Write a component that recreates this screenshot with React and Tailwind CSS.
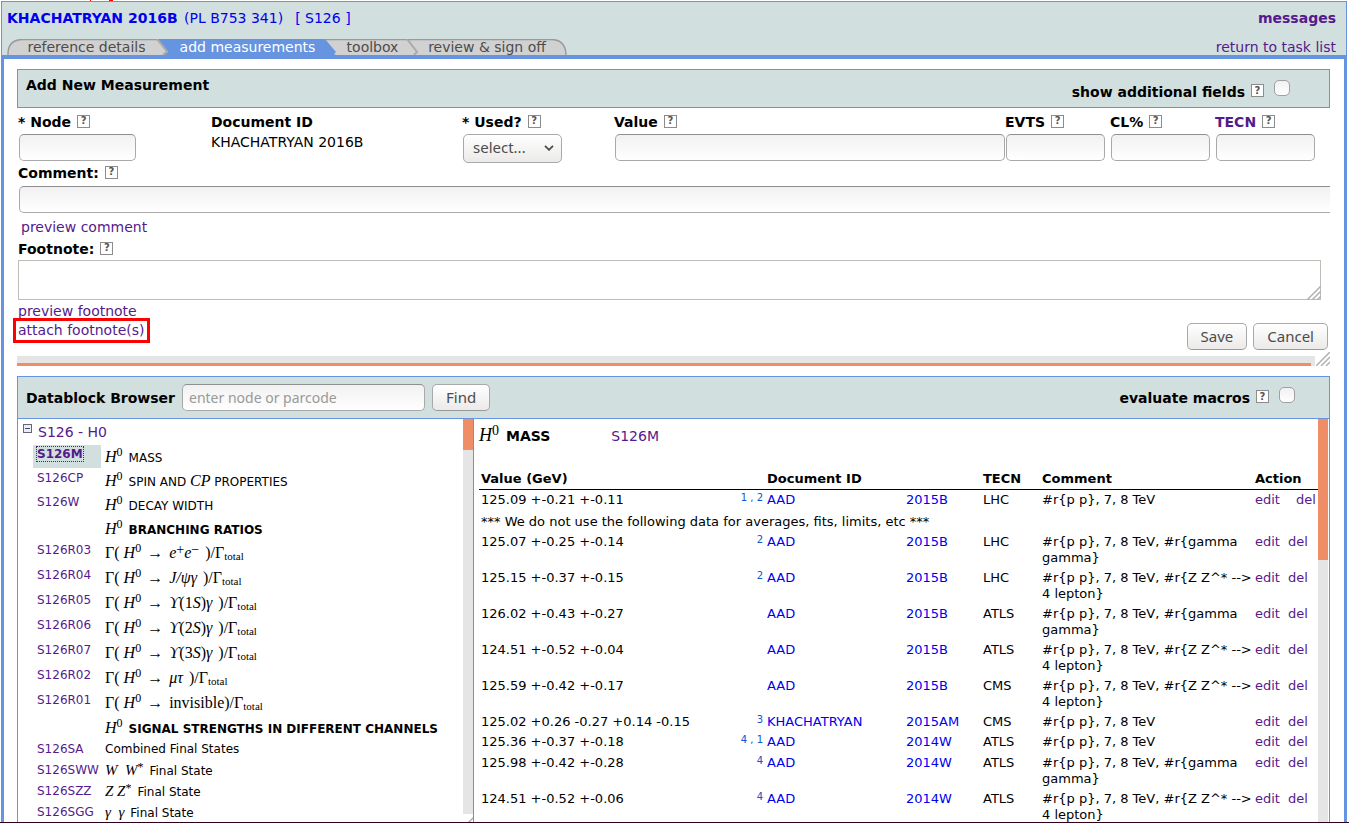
const ui = "font-['Noto_Sans','Open_Sans',sans-serif]";
const serif = "font-['Liberation_Serif',serif]";

const tabs = [
  { name: "reference details", width: "w-[159px]" },
  { name: "add measurements", width: "w-[163px]", active: true },
  { name: "toolbox", width: "w-[87px]" },
  { name: "review & sign off", width: "w-[142px]" },
];

const H0 = ({ size = "text-[12px]" }) => (
  <i>
    H<span className={`relative -top-1.5 not-italic ${size}`}>0</span>
  </i>
);

const Sup = ({ size = "text-sm", children }) => <span className={`relative -top-1 not-italic ${size}`}>{children}</span>;

const Ratio = ({ tight, children }) => (
  <span>
    Γ( <H0 /> <span className="mx-0.5">→</span> <span className={tight ? "" : "mr-1.5"}>{children}</span>
    )/Γ<span className="relative top-0.5 text-[11px]">total</span>
  </span>
);

const Upsilon = ({ n }) => (
  <Ratio>
    <i>ϒ</i>({n}
    <i>S</i>)<i>γ</i>
  </Ratio>
);

const nodes = [
  { code: "S126M", size: "h-6", text: "MASS", label: <H0 />, selected: true },
  {
    code: "S126CP",
    size: "h-6",
    label: <H0 />,
    text: (
      <>
        SPIN AND <i className={`text-base leading-none ${serif}`}>CP</i> PROPERTIES
      </>
    ),
  },
  { code: "S126W", size: "h-6", label: <H0 />, text: "DECAY WIDTH" },
  { size: "h-6", label: <H0 />, text: <b>BRANCHING RATIOS</b> },
  {
    code: "S126R03",
    size: "h-[25px]",
    label: (
      <Ratio>
        <i>
          e<Sup>+</Sup>e<Sup>−</Sup>
        </i>
      </Ratio>
    ),
  },
  { code: "S126R04", size: "h-[25px]", label: <Ratio><i>J/ψγ</i></Ratio> },
  { code: "S126R05", size: "h-[25px]", label: <Upsilon n="1" /> },
  { code: "S126R06", size: "h-[25px]", label: <Upsilon n="2" /> },
  { code: "S126R07", size: "h-[25px]", label: <Upsilon n="3" /> },
  { code: "S126R02", size: "h-[25px]", label: <Ratio><i>μτ</i></Ratio> },
  { code: "S126R01", size: "h-[25px]", label: <Ratio tight>invisible</Ratio> },
  { size: "h-6", label: <H0 />, text: <b>SIGNAL STRENGTHS IN DIFFERENT CHANNELS</b> },
  { code: "S126SA", size: "h-[21px]", short: true, text: "Combined Final States" },
  { code: "S126SWW", size: "h-[21px]", short: true, label: <i>W&nbsp; W<Sup size="text-[12px]">*</Sup></i>, text: "Final State" },
  { code: "S126SZZ", size: "h-[21px]", short: true, label: <i>Z Z<Sup size="text-[12px]">*</Sup></i>, text: "Final State" },
  { code: "S126SGG", size: "h-[21px]", short: true, label: <i>γ&nbsp; γ</i>, text: "Final State" },
];

const gamma = "#r{p p}, 7, 8 TeV, #r{gamma gamma}";
const lepton = "#r{p p}, 7, 8 TeV, #r{Z Z^* --> 4 lepton}";
const plain = "#r{p p}, 7, 8 TeV";

const rows = [
  { value: "125.07 +-0.25 +-0.14", notes: "2", doc: "AAD", year: "2015B", tecn: "LHC", comment: gamma },
  { value: "125.15 +-0.37 +-0.15", notes: "2", doc: "AAD", year: "2015B", tecn: "LHC", comment: lepton },
  { value: "126.02 +-0.43 +-0.27", doc: "AAD", year: "2015B", tecn: "ATLS", comment: gamma },
  { value: "124.51 +-0.52 +-0.04", doc: "AAD", year: "2015B", tecn: "ATLS", comment: lepton },
  { value: "125.59 +-0.42 +-0.17", doc: "AAD", year: "2015B", tecn: "CMS", comment: lepton },
  { value: "125.02 +0.26 -0.27 +0.14 -0.15", notes: "3", doc: "KHACHATRYAN", year: "2015AM", tecn: "CMS", comment: plain },
  { value: "125.36 +-0.37 +-0.18", notes: "4 , 1", doc: "AAD", year: "2014W", tecn: "ATLS", comment: plain },
  { value: "125.98 +-0.42 +-0.28", notes: "4", doc: "AAD", year: "2014W", tecn: "ATLS", comment: gamma },
  { value: "124.51 +-0.52 +-0.06", notes: "4", doc: "AAD", year: "2014W", tecn: "ATLS", comment: lepton },
];

const Help = () => (
  <button
    type="button"
    aria-label="help"
    className="mb-0.5 flex size-[13px] shrink-0 items-center justify-center border border-[#8c8c8c] bg-white text-[10px] leading-none font-bold text-[#555]"
  >
    ?
  </button>
);

const Label = ({ htmlFor, className = "", children }) => (
  <div className="flex h-5 items-center gap-1.5">
    <label htmlFor={htmlFor} className={`font-bold whitespace-nowrap ${className}`}>
      {children}
    </label>
    <Help />
  </div>
);

const TextBox = ({ className = "", ...props }) => (
  <input
    type="text"
    className={`h-[27px] rounded-[5px] border border-[#a9a9a9] border-t-[#8f8f8f] bg-linear-to-b from-[#f1f1f1] to-white px-1.5 text-sm placeholder:text-[#999] ${ui} ${className}`}
    {...props}
  />
);

const Button = ({ children }) => (
  <button
    type="button"
    className={`h-[27px] rounded-[5px] border border-[#a9a9a9] border-b-[#999] bg-linear-to-b from-white to-[#ebeae9] px-[13px] pb-0.5 text-[15px] leading-5 text-[#4c4c4c] ${ui}`}
  >
    {children}
  </button>
);

const CheckBox = ({ id }) => (
  <input
    id={id}
    type="checkbox"
    className="size-4 shrink-0 appearance-none rounded-[5px] border border-[#a0a0a0] bg-linear-to-b from-[#f1f1f1] to-white"
  />
);

const Grip = ({ className = "" }) => (
  <svg viewBox="0 0 14 14" className={`size-3.5 ${className}`} stroke="#b0b0b0" strokeWidth="1.5" aria-hidden="true">
    <path d="M0 14L14 0M5 14L14 5M10 14L14 10" />
  </svg>
);

const A = ({ className = "text-[#551a8b]", children }) => (
  <a href="#" className={className}>
    {children}
  </a>
);

const Measurement = ({ row, size = "h-5", gap = "gap-2" }) => (
  <tr className={size}>
    <td className="whitespace-nowrap">{row.value}</td>
    <td className="relative text-right text-[10px] whitespace-nowrap text-[#1155cc]">
      {row.notes && <span className="absolute top-0 right-0.5">{row.notes}</span>}
    </td>
    <td className="text-[#0000ee]">
      <A className="">{row.doc}</A>
    </td>
    <td className="text-[#0000ee]">
      <A className="">{row.year}</A>
    </td>
    <td>{row.tecn}</td>
    <td>{row.comment}</td>
    <td>
      <div className={`flex ${gap}`}>
        <A>edit</A>
        <A>del</A>
      </div>
    </td>
  </tr>
);

const Header = () => (
  <header className="relative flex h-[58px] justify-between border border-b-4 border-[#6794e0] bg-[#d2dfdf]">
    <svg viewBox="0 0 24 1" className="absolute -top-0.5 left-[88px] h-px w-6" fill="#ff0000" aria-hidden="true">
      <path d="M0 0h1v1H0zM19 0h4v1h-4z" />
    </svg>
    <div className="flex flex-col justify-between pl-[5px]">
      <div className="pt-1.5 leading-5 text-[#0000ee]">
        <A className="font-bold">KHACHATRYAN 2016B</A> <A className="ml-0.5">(PL B753 341)</A>
        <span className="ml-3">
          [ <A className="">S126</A> ]
        </span>
      </div>
      <nav className="relative flex h-4">
        <svg viewBox="0 0 560 16" className="absolute inset-0 h-4 w-[560px]" fill="none" aria-hidden="true">
          <path d="M1 17V15C1 6 6 .5 16 .5H544C554 .5 559 6 559 17Z" fill="#d1d1d1" stroke="#999" strokeWidth="1.4" />
          <path d="M151 0L161 13L157 16H329L327 15L329 13L318 0Z" fill="#6794e0" />
          <path d="M150 0L160 12.5L156 16M400 0L410 13L407 16" stroke="#aaa" strokeWidth="2" />
        </svg>
        {tabs.map((tab) => (
          <a
            key={tab.name}
            href="#"
            className={`relative text-center leading-4 whitespace-nowrap ${tab.width} ${tab.active ? "text-white" : "text-[#4c4c4c]"}`}
          >
            {tab.name}
          </a>
        ))}
      </nav>
    </div>
    <div className="flex flex-col justify-between pr-2.5 text-right">
      <span className="pt-1.5 leading-5 font-bold">
        <A>messages</A>
      </span>
      <span className="leading-4">
        <A>return to task list</A>
      </span>
    </div>
  </header>
);

const MeasurementForm = () => (
  <form>
    <div className="flex h-[39px] items-center justify-between border border-[#6794e0] bg-[#d2dfdf] px-2">
      <h2 className="pb-2 font-bold">Add New Measurement</h2>
      <div className="flex items-center gap-2.5 pr-[31px]">
        <div className="pt-1.5">
          <Label htmlFor="additional">show additional fields</Label>
        </div>
        <div className="flex pb-0.5">
          <CheckBox id="additional" />
        </div>
      </div>
    </div>
    <div className="pt-1 pl-px">
      <div className="grid h-[51px] grid-cols-[193px_251px_152px_minmax(0,1fr)_105px_105px_115px]">
        <div>
          <Label htmlFor="node">* Node</Label>
          <TextBox id="node" className="mt-0.5 ml-px w-[117px]" />
        </div>
        <div className="leading-5">
          <div className="font-bold">Document ID</div>
          <div>KHACHATRYAN 2016B</div>
        </div>
        <div>
          <Label htmlFor="used">* Used?</Label>
          <div className="relative mt-0.5 ml-px w-[99px]">
            <select
              id="used"
              className={`h-[29px] w-full appearance-none rounded-[5px] border border-[#a9a9a9] bg-linear-to-b from-white to-[#ebeae9] px-[9px] pb-0.5 text-[15px] text-[#4c4c4c] ${ui}`}
            >
              <option>select...</option>
            </select>
            <svg viewBox="0 0 10 6" className="pointer-events-none absolute top-[11px] right-2 h-1.5 w-2.5" fill="none" stroke="#4c4c4c" strokeWidth="1.8" aria-hidden="true">
              <path d="M1 .8L5 4.8L9 .8" />
            </svg>
          </div>
        </div>
        <div>
          <Label htmlFor="value">Value</Label>
          <TextBox id="value" className="mt-0.5 ml-px w-[calc(100%-1px)]" />
        </div>
        <div>
          <Label htmlFor="evts">EVTS</Label>
          <TextBox id="evts" className="mt-0.5 ml-px w-[99px]" />
        </div>
        <div>
          <Label htmlFor="cl">CL%</Label>
          <TextBox id="cl" className="mt-0.5 ml-px w-[99px]" />
        </div>
        <div>
          <Label htmlFor="tecn" className="text-[#551a8b]">TECN</Label>
          <TextBox id="tecn" className="mt-0.5 ml-px w-[99px]" />
        </div>
      </div>
      <Label htmlFor="comment">Comment:</Label>
      <div className="overflow-hidden pt-[3px] pl-px">
        <TextBox id="comment" className="block w-[calc(100%+8px)]" />
      </div>
      <div className="pt-1 pb-0.5 pl-[3px] leading-5">
        <A>preview comment</A>
      </div>
      <Label htmlFor="footnote">Footnote:</Label>
      <div className="relative mt-px mr-[9px]">
        <textarea id="footnote" className="block h-10 w-full resize-none border border-[#c0bdb8]" />
        <Grip className="absolute right-0 bottom-0" />
      </div>
      <div className="flex h-14 items-end justify-between pr-0.5 pb-1.5">
        <div className="self-start pt-0.5 leading-[19px]">
          <div>
            <A>preview footnote</A>
          </div>
          <div className="relative w-max">
            <A>attach footnote(s)</A>
            <span className="pointer-events-none absolute -inset-y-[3px] -right-1.5 -left-[5px] border-3 border-[#ff0000]" />
          </div>
        </div>
        <div className="flex gap-1.5">
          <Button>Save</Button>
          <Button>Cancel</Button>
        </div>
      </div>
    </div>
    <div className="relative h-2.5">
      <div className="mr-[15px] h-2.5 bg-[#e5e5e5] pt-[7px]">
        <div className="mr-1 h-[3px] bg-[#ee8d66]" />
      </div>
      <Grip className="absolute right-0 bottom-0" />
    </div>
  </form>
);

const Tree = () => (
  <div className="flex w-[456px] shrink-0 border-r border-[#6794e0]">
    <div className="min-w-0 flex-1 overflow-hidden">
      <div className="flex h-[26px] gap-1.5 pt-[5px] pl-[5px]">
        <button type="button" aria-label="collapse" className="flex size-[9px] items-center justify-center border border-[#667] bg-[#e8eef8]">
          <span className="h-px w-[5px] bg-[#446]" />
        </button>
        <span className="leading-4">
          <A>S126 - H0</A>
        </span>
      </div>
      <ul className="pl-[15px] text-[12px]">
        {nodes.map((node, i) => (
          <li key={i} className={`flex ${node.size}`}>
            <div className={`w-[68px] shrink-0 pl-1 leading-[18px] ${node.selected ? "mb-px bg-[#d2dfdf] font-bold" : ""}`}>
              {node.code && (
                <a href="#" className={`text-[#551a8b] ${node.selected ? "outline-1 outline-dotted" : ""}`}>
                  {node.code}
                </a>
              )}
            </div>
            <div className={`flex items-baseline pl-1 whitespace-nowrap ${node.short ? "leading-[18px]" : "leading-6"}`}>
              {node.label && (
                <span className={`mr-1.5 ${serif} ${node.short ? "text-[15px]/[18px]" : "text-base/6"}`}>{node.label}</span>
              )}
              <span>{node.text}</span>
            </div>
          </li>
        ))}
      </ul>
    </div>
    <div className="flex w-2.5 shrink-0 flex-col">
      <div className="flex-1 bg-[#e5e5e5]">
        <div className="h-[31px] bg-[#ee8d66]" />
      </div>
      <div className="h-2 overflow-hidden">
        <Grip />
      </div>
    </div>
  </div>
);

const Datablock = () => (
  <div className="flex min-w-0 flex-1 pr-px">
    <div className="min-w-0 flex-1 overflow-hidden pl-[5px]">
      <div className="flex h-[51px] items-baseline leading-8">
        <span className={`mr-[7px] text-lg/8 ${serif}`}>
          <H0 size="text-sm" />
        </span>
        <b>MASS</b>
        <span className="ml-[61px]">
          <A>S126M</A>
        </span>
      </div>
      <table className="w-full table-fixed border-collapse text-[13px] leading-4 [&_td]:py-0.5 [&_td]:pl-0.5 [&_td]:align-top [&_th]:pl-0.5">
        <thead>
          <tr className="h-[19px] border-b border-black text-left">
            <th className="w-[246px]">Value (GeV)</th>
            <th className="w-10" aria-label="Footnotes" />
            <th className="w-[139px]">Document ID</th>
            <th className="w-[77px]" aria-label="Year" />
            <th className="w-[59px]">TECN</th>
            <th>Comment</th>
            <th className="w-[65px]">Action</th>
          </tr>
        </thead>
        <tbody>
          <Measurement
            size="h-[23px]"
            gap="gap-4"
            row={{ value: "125.09 +-0.21 +-0.11", notes: "1 , 2", doc: "AAD", year: "2015B", tecn: "LHC", comment: plain }}
          />
          <tr>
            <td colSpan={7}>*** We do not use the following data for averages, fits, limits, etc ***</td>
          </tr>
          {rows.map((row) => (
            <Measurement key={row.value} row={row} size={row.notes?.length > 1 ? "h-[21px]" : "h-5"} />
          ))}
        </tbody>
      </table>
    </div>
    <div className="w-2.5 shrink-0 bg-[#e5e5e5]">
      <div className="h-[141px] bg-[#ee8d66]" />
    </div>
  </div>
);

const App = () => {
  return (
    <div className="flex h-screen flex-col overflow-hidden border-b border-[#2c001e] bg-white pt-px pr-0.5 pl-px font-['DejaVu_Sans',sans-serif] text-sm text-black">
      <Header />
      <main className="flex min-h-0 flex-1 flex-col border-x-3 border-[#6794e0] pt-2.5 pr-3.5 pl-[13px]">
        <MeasurementForm />
        <section className="mt-2.5 flex min-h-0 flex-1 flex-col border border-b-0 border-[#6794e0]">
          <div className="flex h-[42px] shrink-0 items-center justify-between border-b border-[#6794e0] bg-[#d2dfdf] pr-[34px] pl-2">
            <div className="flex items-center">
              <label htmlFor="browse" className="font-bold">
                Datablock Browser
              </label>
              <TextBox id="browse" placeholder="enter node or parcode" className="mx-[7px] w-[243px]" />
              <Button>Find</Button>
            </div>
            <div className="flex items-center gap-2.5">
              <Label htmlFor="macros">evaluate macros</Label>
              <div className="flex pb-1.5">
                <CheckBox id="macros" />
              </div>
            </div>
          </div>
          <div className="flex min-h-0 flex-1">
            <Tree />
            <Datablock />
          </div>
        </section>
      </main>
    </div>
  );
};

export default App;
